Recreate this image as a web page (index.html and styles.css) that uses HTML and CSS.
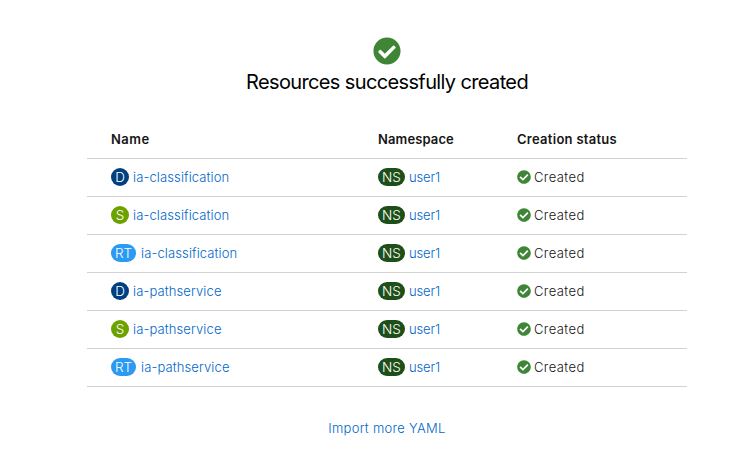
FILE: index.html
```html
<!DOCTYPE html>
<html lang="en">
<head>
<meta charset="utf-8">
<title>Resources successfully created</title>
<link rel="stylesheet" href="styles.css">
</head>
<body>
<svg class="defs" aria-hidden="true"><symbol id="check" viewBox="0 0 512 512"><path fill="currentColor" d="M504 256c0 136.967-111.033 248-248 248S8 392.967 8 256 119.033 8 256 8s248 111.033 248 248zM227.314 387.314l184-184c6.248-6.248 6.248-16.379 0-22.627l-22.627-22.627c-6.248-6.249-16.379-6.249-22.628 0L216 308.118l-70.059-70.059c-6.248-6.248-16.379-6.248-22.628 0l-22.627 22.627c-6.248 6.248-6.248 16.379 0 22.627l104 104c6.249 6.249 16.379 6.249 22.628.001z"/></symbol></svg>
<main class="results">
  <svg class="hero-icon"><use href="#check"/></svg>
  <h1 class="title"><span>Resources successfully created</span></h1>
  <div class="table" role="table">
    <div class="row head" role="row"><span class="h-name">Name</span><span class="h-ns">Namespace</span><span class="h-status">Creation status</span></div>
    <div class="row" role="row"><div class="cell"><span class="badge deployment">D</span><a>ia-classification</a></div><div class="cell"><span class="badge namespace">NS</span><a class="user">user1</a></div><div class="cell status"><svg class="icon"><use href="#check"/></svg><span>Created</span></div></div>
    <div class="row" role="row"><div class="cell"><span class="badge service">S</span><a>ia-classification</a></div><div class="cell"><span class="badge namespace">NS</span><a class="user">user1</a></div><div class="cell status"><svg class="icon"><use href="#check"/></svg><span>Created</span></div></div>
    <div class="row" role="row"><div class="cell"><span class="badge route">RT</span><a>ia-classification</a></div><div class="cell"><span class="badge namespace">NS</span><a class="user">user1</a></div><div class="cell status"><svg class="icon"><use href="#check"/></svg><span>Created</span></div></div>
    <div class="row" role="row"><div class="cell"><span class="badge deployment">D</span><a>ia-pathservice</a></div><div class="cell"><span class="badge namespace">NS</span><a class="user">user1</a></div><div class="cell status"><svg class="icon"><use href="#check"/></svg><span>Created</span></div></div>
    <div class="row" role="row"><div class="cell"><span class="badge service">S</span><a>ia-pathservice</a></div><div class="cell"><span class="badge namespace">NS</span><a class="user">user1</a></div><div class="cell status"><svg class="icon"><use href="#check"/></svg><span>Created</span></div></div>
    <div class="row" role="row"><div class="cell"><span class="badge route">RT</span><a>ia-pathservice</a></div><div class="cell"><span class="badge namespace">NS</span><a class="user">user1</a></div><div class="cell status"><svg class="icon"><use href="#check"/></svg><span>Created</span></div></div>
  </div>
  <a class="import">Import more YAML</a>
</main>
</body>
</html>
```
FILE: styles.css
```css
* { box-sizing: border-box; }
body { margin: 0; background: #fff; color: #151515; font: 350 13px/20px Inter, "Open Sans", sans-serif; letter-spacing: 0.12px; }
.defs { display: none; }
.results { width: 600px; margin-left: 87px; padding-top: 37px; display: flex; flex-direction: column; align-items: center; }
.hero-icon { width: 28px; height: 28px; color: #3e8635; }
.title { margin: 2px 0 0; font-size: 20px; line-height: 30px; font-weight: 400; letter-spacing: -0.63px; color: #000; white-space: nowrap; }
.table { width: 100%; margin-top: 24px; }
.row { display: grid; grid-template-columns: 267px 139px 1fr; align-items: center; height: 38px; padding: 0 0 1px 24px; border-bottom: 1px solid #d2d2d2; }
.head { font-weight: 600; }
.h-name { letter-spacing: 0.5px; }
.h-ns { letter-spacing: 0.12px; }
.h-status { letter-spacing: 0.28px; }
.cell { display: flex; align-items: center; white-space: nowrap; }
.badge { height: 18px; line-height: 18px; border-radius: 9px; color: #fff; text-align: center; font-size: 13.5px; letter-spacing: 0; margin-right: 4px; }
.deployment { width: 18px; background: #004080; }
.service { width: 18px; background: #6ca100; }
.route { width: 25px; background: #2b9af3; margin-right: 5px; }
.namespace { width: 27px; background: #1e4f18; }
a { color: #0066cc; text-decoration: none; }
.user { letter-spacing: -0.15px; }
.icon { width: 14px; height: 14px; color: #3e8635; margin-right: 3px; }
.status { letter-spacing: 0.4px; }
.import { margin-top: 31px; letter-spacing: 0.28px; }
```
